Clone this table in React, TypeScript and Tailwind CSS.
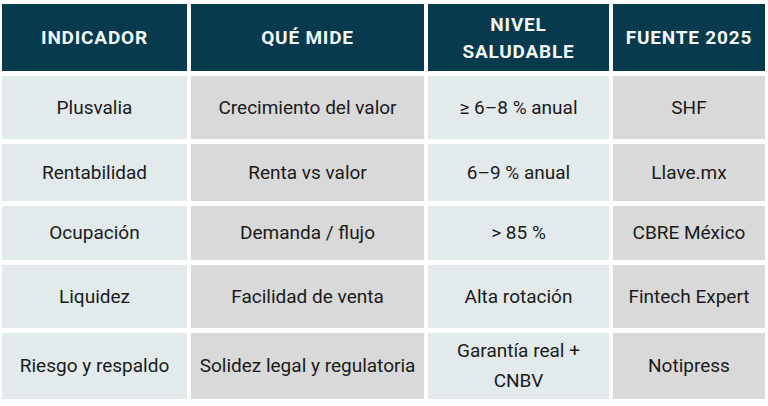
const headers = ['INDICADOR', 'QUÉ MIDE', 'NIVEL SALUDABLE', 'FUENTE 2025'];

const rows = [
	{ h: 'h-[63px]', cells: ['Plusvalia', 'Crecimiento del valor', '≥ 6–8 % anual', 'SHF'] },
	{ h: 'h-[57px]', cells: ['Rentabilidad', 'Renta vs valor', '6–9 % anual', 'Llave.mx'] },
	{ h: 'h-[54px]', cells: ['Ocupación', 'Demanda / flujo', '> 85 %', 'CBRE México'] },
	{ h: 'h-[63px]', cells: ['Liquidez', 'Facilidad de venta', 'Alta rotación', 'Fintech Expert'] },
	{ h: 'h-[66px]', cells: ['Riesgo y respaldo', 'Solidez legal y regulatoria', 'Garantía real + CNBV', 'Notipress'] },
];

// even columns light blue-gray, odd columns gray
const cellBg = ['bg-[#e2eaec]', 'bg-[#d9d9d9]', 'bg-[#e2eaec]', 'bg-[#d9d9d9]'];

export default function App() {
	return (
		<div
			className="w-[768px] h-[406px] bg-white pl-[2px] pt-[4px]"
			style={{ fontFamily: 'Roboto, "Liberation Sans", sans-serif' }}
		>
			<div className="grid grid-cols-[185px_233px_181px_152px] gap-x-[4px] gap-y-[5px]">
				{headers.map((t) => (
					<div
						key={t}
						className={`h-[67px] bg-[#063a4c] text-[#f4f7f7] font-bold text-[19px] tracking-[0.8px] leading-[27px] flex items-center justify-center text-center ${t === 'NIVEL SALUDABLE' ? 'px-10' : 'px-0'}`}
					>
						{t}
					</div>
				))}
				{rows.map((row, r) =>
					row.cells.map((c, i) => (
						<div
							key={r + '-' + i}
							className={`${row.h} ${cellBg[i]} text-[#1a1a1a] text-[19px] leading-[30px] flex items-center justify-center text-center px-2`}
						>
							{c}
						</div>
					)),
				)}
			</div>
		</div>
	);
}
